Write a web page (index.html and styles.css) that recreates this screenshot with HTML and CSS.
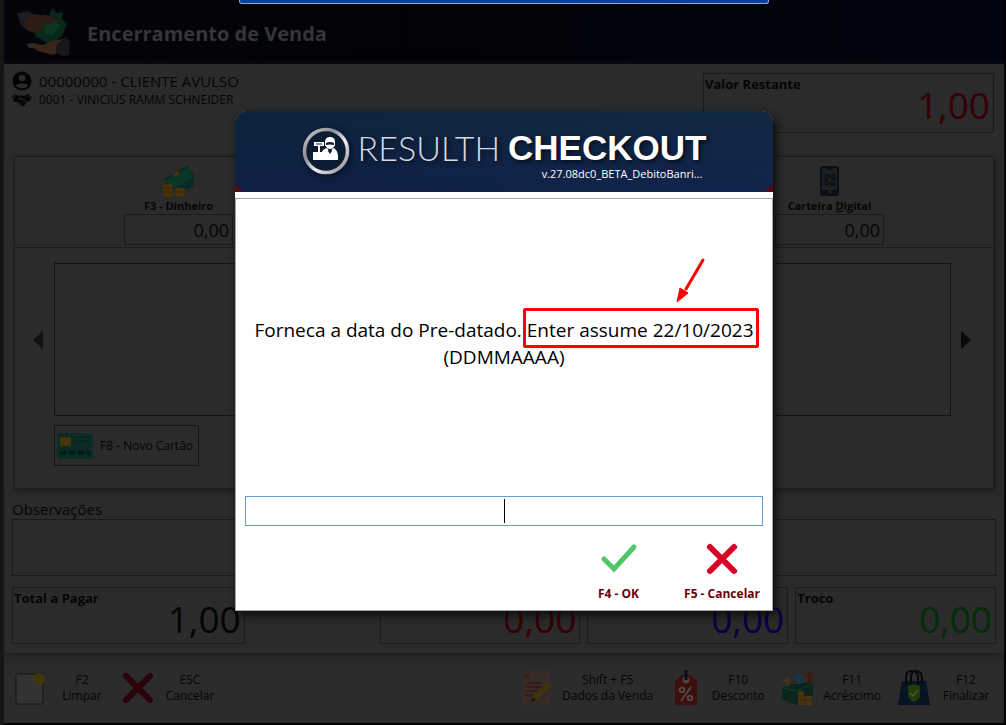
FILE: index.html
```html
<!DOCTYPE html>
<html lang="pt-BR">
<head>
<meta charset="utf-8">
<title>Encerramento de Venda</title>
<link rel="stylesheet" href="styles.css">
</head>
<body>
<div class="app">
  <header class="titlebar">
    <svg class="titlebar-icon" viewBox="0 0 56 52" aria-hidden="true">
      <path d="M20 20 28 8 33 10 36 2 41 7 47 6 46 13 51 18 46 30 34 39 19 30Z" fill="#07281b"/>
      <path d="M28 20 36 14 44 20 36 29 28 26Z" fill="#0b3624"/>
      <path d="M1 7 12 5 19 10 12 25 5 19Z" fill="#1c1c22"/>
      <path d="M8 15 17 8 34 10 44 16 36 18 26 17 30 21 20 27 12 25Z" fill="#2c1e16"/>
      <path d="M11 38 17 37 27 39 38 34 49 33 46 44 37 49 22 45 18 42 13 42Z" fill="#382619"/>
      <path d="M41 38 50 31 54 36 53 49 46 50 40 46Z" fill="#17171d"/>
    </svg>
    <h1 class="titlebar-text">Encerramento de Venda</h1>
  </header>

  <main class="content">
    <section class="summary">
      <div class="people">
        <p class="customer">
          <svg class="person-icon" viewBox="0 0 20 20" aria-hidden="true"><circle cx="10" cy="10" r="9.5" fill="#050505"/><circle cx="10" cy="7" r="3.2" fill="#2b2b2b"/><path d="M4 15C4 11.5 16 11.5 16 15C13 18 7 18 4 15Z" fill="#2b2b2b"/></svg>
          <span>00000000 - CLIENTE AVULSO</span>
        </p>
        <p class="seller">
          <svg class="person-icon" viewBox="0 0 20 14" aria-hidden="true"><path d="M0 3 4 1 6 3 9 2 11 3 14 2 16 1 20 4 18 8 15 9 12 13 9 13 5 9 2 9Z" fill="#050505"/><path d="M3 2 1 6M17 2 19 6M8 4 7 6 10 6 15 9M6 9 9 12" stroke="#2b2b2b" fill="none"/></svg>
          <span>0001 - VINICIUS RAMM SCHNEIDER</span>
        </p>
      </div>
      <div class="amount amount-remaining">
        <span class="amount-label">Valor Restante</span>
        <output class="amount-value red">1,00</output>
      </div>
    </section>

    <section class="payments">
      <div class="methods">
        <div class="method">
          <svg class="method-icon" viewBox="0 0 34 32" aria-hidden="true"><path d="M2 14 26 0 32 11 31 22 17 27 4 19Z" fill="#072c23"/><path d="M3 16 27 2 31 12 12 23Z" fill="#0a3529"/><path d="M11 9 16 6 18 9 13 12Z" fill="#49340f"/><rect x="1" y="19" width="10" height="13" rx="2" fill="#49310a"/><rect x="13" y="23" width="10" height="9" rx="2" fill="#49310a"/><path d="M1 23h10M1 27h10M13 27h10" stroke="#392707"/></svg>
          <label class="method-label" for="cash">F3 - Dinheiro</label>
          <input class="method-value" id="cash" type="text" value="0,00">
        </div>
        <div class="method">
          <svg class="method-icon" viewBox="0 0 34 32" aria-hidden="true"><rect x="8" y="2" width="17" height="28" rx="2" fill="#1c2024" stroke="#0b1015" stroke-width="2"/><path d="M13 2h7v3h-7z" fill="#0b1015"/><path d="M8 25h17v4H8z" fill="#0b1015"/><path d="M12 10h3v3h-3zM19 10h3v3h-3zM12 17h3v3h-3zM17 9v4M17 15h5M17 18h3M21 17v4M11 15h4M17 20h3" fill="none" stroke="#05090c"/><circle cx="17" cy="27" r="1" fill="#34383c"/></svg>
          <label class="method-label" for="wallet">Carteira <u>D</u>igital</label>
          <input class="method-value" id="wallet" type="text" value="0,00">
        </div>
      </div>
      <div class="cards">
        <button class="pager" type="button" aria-label="Anterior"><svg viewBox="0 0 10 18"><path d="M10 0V18L0 9Z" fill="#111"/></svg></button>
        <div class="card-list"></div>
        <button class="pager" type="button" aria-label="Próximo"><svg viewBox="0 0 10 18"><path d="M0 0V18L10 9Z" fill="#090909"/></svg></button>
        <button class="new-card" type="button">
          <svg class="card-icon" viewBox="0 0 36 26" aria-hidden="true"><rect width="36" height="26" rx="2" fill="#0b2c25"/><rect x="3" y="4" width="11" height="9" rx="1" fill="#443408"/><path d="M18 4h15M18 8h15" stroke="#071d18" stroke-dasharray="3 1"/><path d="M3 20h30" stroke="#071a17" stroke-width="4" stroke-dasharray="6 3"/></svg>
          <span>F8 - Novo Cartão</span>
        </button>
      </div>
    </section>

    <section class="notes">
      <label class="notes-label" for="notes">Observações</label>
      <textarea class="notes-field" id="notes"></textarea>
    </section>

    <section class="totals">
      <div class="amount"><span class="amount-label">Total a Pagar</span><output class="amount-value">1,00</output></div>
      <div></div>
      <div class="amount"><output class="amount-value red">0,00</output></div>
      <div class="amount"><output class="amount-value blue">0,00</output></div>
      <div class="amount"><span class="amount-label">Troco</span><output class="amount-value green">0,00</output></div>
    </section>
  </main>

  <footer class="actions">
    <div class="action-group action-group-start">
      <button class="action" type="button">
        <svg class="action-icon" viewBox="0 0 32 36" aria-hidden="true"><rect x="2" y="4" width="27" height="30" rx="1" fill="#333" stroke="#151515"/><circle cx="25" cy="9" r="6" fill="#3d3a0e"/><circle cx="24" cy="9" r="3" fill="#39370c"/></svg>
        <span class="action-label">F2<br>Limpar</span>
      </button>
      <button class="action" type="button">
        <svg class="action-icon" viewBox="0 0 32 36" aria-hidden="true"><path d="M4 6 28 30M28 6 4 30" stroke="#2d0009" stroke-width="6" stroke-linecap="round"/></svg>
        <span class="action-label">ESC<br>Cancelar</span>
      </button>
    </div>
    <div class="action-group">
      <button class="action" type="button">
        <svg class="action-icon" viewBox="0 0 32 36" aria-hidden="true"><path d="M8 1H29V35H1V8Z" fill="#352c28"/><path d="M8 1V8H1Z" fill="#3e1c19"/><path d="M6 13h15M4 17h17M4 21h13M4 25h9" stroke="#3b1513" stroke-width="1.5"/><path d="M10 32 12 26 27 11 31 15 16 30Z" fill="#3e350b"/><path d="M26 12 29 10 32 13 30 16Z" fill="#282c30"/><path d="M10 32 12 27 15 30Z" fill="#15150f"/></svg>
        <span class="action-label">Shift + F5<br>Dados da Venda</span>
      </button>
      <button class="action" type="button">
        <svg class="action-icon" viewBox="0 0 32 36" aria-hidden="true"><path d="M12 5H20L27 11V33Q27 35 25 35H7Q5 35 5 33V11Z" fill="#3c0e0c"/><circle cx="16" cy="10" r="3.5" fill="#494444"/><path d="M16 0V10" stroke="#0a1015" stroke-width="3"/><path d="M21 17 11 31" stroke="#514747" stroke-width="2"/><g fill="none" stroke="#514747" stroke-width="2"><circle cx="12" cy="20" r="2.3"/><circle cx="20" cy="28" r="2.3"/></g></svg>
        <span class="action-label">F10<br>Desconto</span>
      </button>
      <button class="action" type="button">
        <svg class="action-icon" viewBox="0 0 32 36" aria-hidden="true"><path d="M0 18 11 14 31 12V28L15 35 0 29Z" fill="#09251e"/><path d="M0 18 16 21 31 13" fill="none" stroke="#123a2f"/><path d="M4 16V12H0L5 7 10 12H7V16Z" fill="#453414"/><path d="M15 14V9H11L17 3 22 9H19V14Z" fill="#113a4d"/><path d="M26 13V7H23L28 0 32 7H30V13Z" fill="#401713"/><path d="M16 22Q19 19 22 22V26H30V35H16Z" fill="#493414"/><path d="M16 26h6M16 30h14M23 26v9" stroke="#39270c"/></svg>
        <span class="action-label">F11<br>Acréscimo</span>
      </button>
      <button class="action" type="button">
        <svg class="action-icon" viewBox="0 0 32 36" aria-hidden="true"><path d="M4 11H28L32 35H0Z" fill="#071421"/><path d="M8 14V7Q8 1 14 1T20 7V14M13 14V7Q13 1 18 1T24 7V14" fill="none" stroke="#05090e" stroke-width="2"/><path d="M10 16 16 14 22 16V25Q22 29 16 32Q10 29 10 25Z" fill="#203d09"/><path d="M12 23 15 26 20 20" stroke="#4b5643" fill="none" stroke-width="1.5"/></svg>
        <span class="action-label">F12<br>Finalizar</span>
      </button>
    </div>
  </footer>

  <div class="top-strip"></div>

  <div class="overlay">
    <form class="dialog" role="dialog" aria-labelledby="prompt">
      <div class="dialog-header">
        <div class="banner">
          <svg class="brand-icon" viewBox="0 0 48 48" aria-hidden="true">
            <defs><linearGradient id="ring" x1="0" y1="0" x2="1" y2="1"><stop offset="0" stop-color="#ccc"/><stop offset=".35" stop-color="#8c8c92"/><stop offset=".6" stop-color="#eee"/><stop offset="1" stop-color="#85858b"/></linearGradient></defs>
            <circle cx="24" cy="24" r="21.5" fill="#0c1c33" stroke="url(#ring)" stroke-width="3.5"/>
            <path d="M12 15h10v4h-4v6h-2v-6h-4z" fill="#fff"/><path d="M14 17h6" stroke="#0c1c33"/>
            <path d="M11 25H20Q21 22 25 21L28 25 31 21Q35 22 36 28V33H11Z" fill="#fff"/>
            <path d="M23 15Q23 10 28 10T33 15V18Q31 22 28 22T23 18Z" fill="#fff"/><path d="M24 16Q28 14 32 16V18Q28 17 24 18Z" fill="#0c1c33"/><path d="M27 22h2l1 2-2 3-2-3z" fill="#0c1c33"/>
          </svg>
          <div class="brand">
            <div class="brand-name"><span class="brand-light">RESULTH</span><span class="brand-bold">CHECKOUT</span></div>
            <div class="version">v.27.08dc0_BETA_DebitoBanri...</div>
          </div>
        </div>
      </div>
      <div class="dialog-body">
        <label class="prompt" id="prompt" for="answer">Forneca a data do Pre-datado. <span class="marked">Enter assume 22/10/2023<svg class="marker-arrow" viewBox="0 0 30 48" aria-hidden="true"><path d="M27 4 10 33" stroke="#f00" stroke-width="3" stroke-linecap="round"/><path d="M1 46 4 32 12 37Z" fill="#f00" stroke="#f00" stroke-linejoin="round"/></svg></span><br>(DDMMAAAA)</label>
        <div class="answer-row">
          <input class="answer" id="answer" type="text"><span class="caret"></span>
        </div>
        <div class="dialog-actions">
          <button class="dialog-button" type="button">
            <svg class="dialog-icon" viewBox="0 0 38 34" aria-hidden="true"><path d="M4 17 14 27 34 5" fill="none" stroke="#4fc668" stroke-width="5" stroke-linecap="round"/></svg>
            <span>F4 - OK</span>
          </button>
          <button class="dialog-button" type="button">
            <svg class="dialog-icon" viewBox="0 0 38 34" aria-hidden="true"><path d="M7 5 31 29M31 5 7 29" stroke="#d80027" stroke-width="6" stroke-linecap="round"/></svg>
            <span>F5 - Cancelar</span>
          </button>
        </div>
      </div>
    </form>
  </div>
</div>
</body>
</html>
```

FILE: styles.css
```css
* { box-sizing: border-box; }

body {
  margin: 0;
  min-height: 100vh;
  padding: 0 2px 2px 4px;
  background: linear-gradient(90deg, #161616 4px, #000 4px);
  font-family: "Open Sans", "Noto Sans", sans-serif;
  font-size: 12px;
  color: #050505;
}

button, input, textarea { font: inherit; color: inherit; }
button { padding: 0; border: 0; background: none; }
p, h1 { margin: 0; }
svg { display: block; flex: none; }

.app {
  position: relative;
  display: flex;
  flex-direction: column;
  min-height: calc(100vh - 2px);
  background: #2b2b2b;
}

.titlebar {
  display: flex;
  align-items: center;
  gap: 15px;
  height: 64px;
  padding: 0 12px;
  background: linear-gradient(90deg, #03050b, #020307 40%, #020511);
}
.titlebar-icon { width: 56px; height: 52px; }
.titlebar-text {
  padding-top: 3px;
  font-size: 20px;
  line-height: 28px;
  font-weight: 700;
  color: #363638;
}

.content {
  flex: 1;
  display: flex;
  flex-direction: column;
  padding: 9px 8px;
  box-shadow: 0 2px 8px #1c1c1c;
}

.summary {
  display: flex;
  justify-content: space-between;
  align-items: flex-start;
  padding-right: 2px;
}
.people { display: flex; flex-direction: column; margin-top: -2px; }
.customer, .seller { display: flex; align-items: center; gap: 7px; }
.customer { font-size: 15px; line-height: 18px; }
.seller { font-size: 12px; line-height: 18px; }
.person-icon { width: 20px; }

.amount {
  position: relative;
  display: flex;
  flex-direction: column;
  justify-content: flex-end;
  height: 57px;
  padding-bottom: 6px;
  border: 1px solid #1b1b1b;
}
.amount-remaining {
  width: 291px;
  height: 60px;
  padding-bottom: 9px;
}
.amount-label {
  position: absolute;
  top: 1px;
  left: 1px;
  font-size: 13px;
  line-height: 18px;
  font-weight: 700;
}
.amount-value {
  padding-right: 3px;
  font-size: 37px;
  line-height: 36px;
  text-align: right;
}
.red { color: #360004; }
.blue { color: #080044; }
.green { color: #052c08; }

.payments {
  display: flex;
  flex-direction: column;
  height: 333px;
  margin: 23px 2px 0;
  border: 1px solid #1d1d1d;
  box-shadow: 2px 2px 6px #1c1c1c;
}
.methods {
  display: flex;
  justify-content: space-between;
  padding: 8px 109px 2px;
  border-bottom: 1px solid #1b1b1b;
}
.method {
  display: flex;
  flex-direction: column;
  align-items: center;
  width: 109px;
}
.method-icon { width: 34px; height: 32px; }
.method-label {
  font-size: 11px;
  line-height: 17px;
  font-weight: 700;
}
.method-value {
  width: 100%;
  height: 31px;
  padding: 0 3px;
  border: 1px solid #1b1b1b;
  background: none;
  font-size: 18px;
  text-align: right;
}
.cards {
  flex: 1;
  display: grid;
  grid-template-columns: 39px 1fr 42px;
  grid-template-rows: 153px 41px;
  row-gap: 9px;
  padding-top: 15px;
}
.pager { display: grid; place-items: center; }
.pager:first-child { padding-left: 6px; }
.pager:nth-child(3) { padding-right: 13px; }
.pager svg { width: 10px; height: 18px; }
.card-list { border: 1px solid #151515; }
.new-card {
  grid-column: 2;
  justify-self: start;
  display: flex;
  align-items: center;
  gap: 7px;
  width: 145px;
  padding: 0 2px;
  border: 1px solid #151515;
}
.card-icon { width: 36px; height: 26px; }

.notes { display: flex; flex-direction: column; margin-top: 11px; }
.notes-label { font-size: 15px; line-height: 19px; }
.notes-field {
  height: 57px;
  border: 1px solid #1b1b1b;
  background: none;
  resize: none;
}

.totals {
  display: grid;
  grid-template-columns: 233fr 121fr 201fr 201fr 201fr;
  gap: 7px;
  margin-top: 11px;
}

.actions {
  display: flex;
  justify-content: space-between;
  align-items: center;
  height: 70px;
  padding: 0 11px 0 10px;
}
.action-group { display: flex; gap: 17px; }
.action-group-start { gap: 13px; }
.action { display: flex; align-items: center; gap: 9px; }
.action-icon { width: 32px; height: 36px; }
.action-label { min-width: 54px; line-height: 16px; text-align: center; }

.top-strip {
  position: absolute;
  top: 0;
  left: 50%;
  width: 530px;
  height: 4px;
  margin-left: -265px;
  border: 1px solid #7fa9e0;
  border-top: 0;
  border-radius: 0 0 3px 3px;
  background: #0b409c;
}

.overlay {
  position: absolute;
  inset: 0;
  display: grid;
  place-items: center;
  padding-bottom: 2px;
}
.dialog {
  width: 538px;
  border-radius: 12px 12px 0 0;
  background: #fff;
  box-shadow: 3px 4px 10px #0c0c0c;
}
.dialog-header {
  height: 81px;
  border-radius: 12px 12px 0 0;
  background: #650008;
}
.banner {
  display: flex;
  justify-content: center;
  align-items: center;
  gap: 8px;
  height: 100%;
  border-radius: 12px;
  background: linear-gradient(rgba(16, 40, 64, 0.8), rgba(18, 34, 76, 0.8)), linear-gradient(90deg, #06152c, #14294a);
}
.brand-icon {
  width: 48px;
  height: 48px;
  border-radius: 50%;
  box-shadow: 2px 2px 6px #071226;
}
.brand { display: flex; flex-direction: column; padding-top: 10px; }
.brand-name {
  display: flex;
  align-items: center;
  gap: 8px;
  line-height: 40px;
  height: 36px;
  text-shadow: 2px 2px 4px #050d1d;
}
.brand-light {
  font-family: Lato, sans-serif;
  font-size: 34px;
  font-weight: 300;
  color: #d5d9e0;
}
.brand-bold {
  font-family: "Liberation Sans", Arial, sans-serif;
  font-size: 35px;
  font-weight: 700;
  color: #fff;
}
.version {
  padding-right: 4px;
  font-size: 11px;
  line-height: 16px;
  text-align: right;
  color: #fff;
}
.dialog-body {
  display: flex;
  flex-direction: column;
  margin-top: 6px;
  padding: 0 9px 8px;
  border: 1px solid #a5a5a5;
}
.prompt {
  display: block;
  padding: 118px 0 125px;
  font-size: 19px;
  line-height: 27px;
  text-align: center;
  white-space: nowrap;
  color: #000;
}
.marked { position: relative; }
.marked::after {
  content: "";
  position: absolute;
  inset: -9px -5px -5px -4px;
  border: 3px solid #f00;
  border-radius: 2px;
}
.marker-arrow {
  position: absolute;
  right: 48px;
  bottom: 39px;
  width: 30px;
  height: 48px;
}
.answer-row { position: relative; }
.answer {
  display: block;
  width: 100%;
  height: 30px;
  border: 1px solid #6a9bd0;
  background: #fff;
  font-size: 18px;
  text-align: center;
}
.caret {
  position: absolute;
  top: 3px;
  left: 50%;
  width: 1px;
  height: 24px;
  background: #000;
}
.dialog-actions {
  display: flex;
  justify-content: flex-end;
  gap: 26px;
  padding-top: 16px;
}
.dialog-button {
  display: flex;
  flex-direction: column;
  align-items: center;
  gap: 9px;
  min-width: 76px;
  padding-right: 3px;
  font-size: 12px;
  line-height: 17px;
  font-weight: 700;
  color: #6b0004;
}
.dialog-icon { width: 38px; height: 34px; }
```
